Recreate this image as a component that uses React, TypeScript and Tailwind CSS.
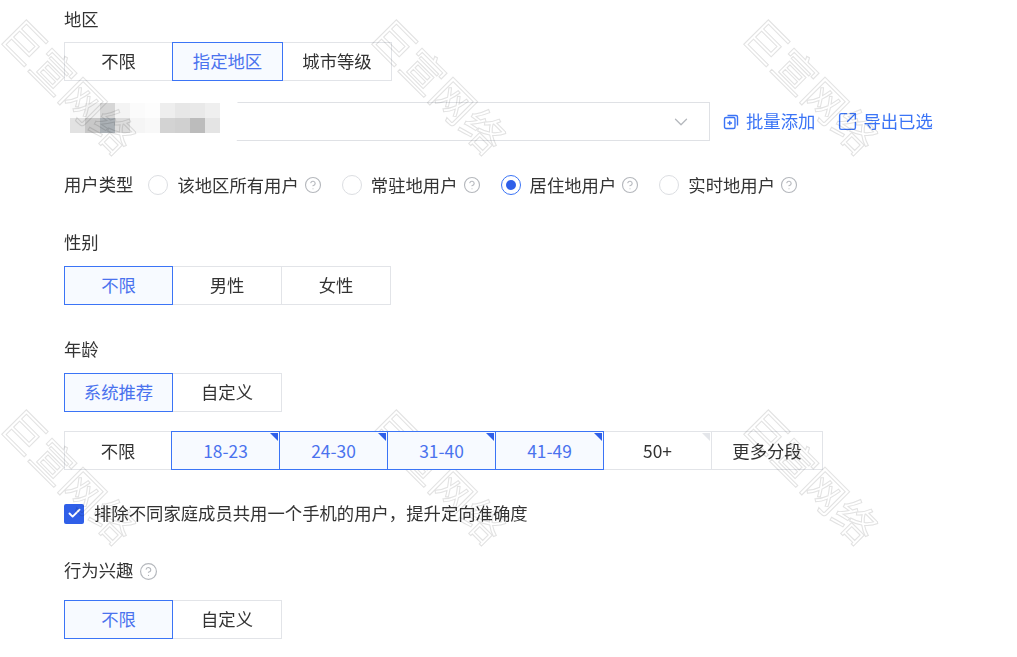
import { ChevronDown, CircleHelp, SquareArrowOutUpRight, Check } from "lucide-react";

function Seg({ label, active, corner, w = "w-[110px]" }: { label: string; active?: boolean; corner?: "on" | "off"; w?: string }) {
  return (
    <div
      className={
        "relative -ml-px first:ml-0 h-full flex items-center justify-center border pb-[2px] " +
        w +
        (active ? " z-10 border-[#3b74f6] bg-[#f7faff] text-[#4a72ee]" : " border-[#e2e4e8] bg-white text-[#333333]")
      }
    >
      {label}
      {corner === "on" && (
        <span className="absolute top-px right-px w-0 h-0 border-l-[8px] border-l-transparent border-t-[8px] border-t-[#2f5fe8]" />
      )}
      {corner === "off" && (
        <span className="absolute top-px right-px w-0 h-0 border-l-[8px] border-l-transparent border-t-[8px] border-t-[#e4e6ea]" />
      )}
    </div>
  );
}

function Radio({ label, checked, className }: { label: string; checked?: boolean; className?: string }) {
  return (
    <div className={"flex items-center " + (className ?? "")}>
      <span className={"w-5 h-5 rounded-full border flex items-center justify-center bg-white " + (checked ? "border-[#3b74f6]" : "border-[#dcdee2]")}>
        {checked && <span className="w-2.5 h-2.5 rounded-full bg-[#2f5fe8]" />}
      </span>
      <span className="ml-[9px]">{label}</span>
      <CircleHelp size={18} strokeWidth={1.5} className="ml-[5px] text-[#b5b8bd]" />
    </div>
  );
}

function BatchIcon() {
  return (
    <svg width="16" height="16" viewBox="0 0 16 16" fill="none" stroke="#3b74f6" strokeWidth="1.4">
      <rect x="1.5" y="3.5" width="10.5" height="11" rx="1.5" />
      <path d="M4.5 1.5H13a1.5 1.5 0 0 1 1.5 1.5v8.5" />
      <path d="M6.7 6.7v4.6M4.4 9h4.6" />
    </svg>
  );
}

function Mark({ pos }: { pos: string }) {
  return (
    <div
      className={
        "absolute rotate-45 origin-center whitespace-nowrap text-[42px] leading-none font-normal text-transparent [-webkit-text-stroke:1px_#e2e2e2] " +
        pos
      }
    >
      巨宣网络
    </div>
  );
}

const row1 = ["#fbfbfb", "#f1f1f1", "#d6d6d6", "#f4f4f4", "#fbfbfb", "#fdfdfd", "#eeeeee", "#e7e7e7", "#e9e9e9", "#efefef"];
const row2 = ["#e2e2e2", "#c8c8c8", "#aab0b5", "#dcdcdc", "#f5f5f5", "#f8f8f8", "#d3d3d3", "#d0d0d0", "#bcbcbc", "#e4e4e4"];

export default function App() {
  return (
    <div
      className="relative w-[1017px] h-[657px] overflow-hidden bg-white pl-16 pt-[9px] text-[17.35px] leading-[20px] text-[#333333]"
      style={{ fontFamily: '"Noto Sans CJK SC", "Noto Sans", sans-serif' }}
    >
      <div>地区</div>
      <div className="flex h-[39px] mt-[13px]">
        <Seg label="不限" w="w-[109px]" />
        <Seg label="指定地区" active w="w-[111px]" />
        <Seg label="城市等级" />
      </div>

      <div className="flex items-center mt-[21px]">
        <div className="w-[646px] h-[39px] border border-[#dfe1e5] flex items-center justify-end pr-[17px] text-[#b5b8bd]">
          <ChevronDown size={22} strokeWidth={1.4} />
        </div>
        <div className="flex items-center ml-[13px] text-[#3b74f6]">
          <BatchIcon />
          <span className="ml-[7px] pb-[2px]">批量添加</span>
          <SquareArrowOutUpRight size={21} strokeWidth={1.6} className="ml-[22px]" />
          <span className="ml-[5px] pb-[2px]">导出已选</span>
        </div>
      </div>

      <div className="flex items-center mt-[34px] h-5">
        <span className="pb-[2px]">用户类型</span>
        <Radio label="该地区所有用户" className="ml-[15px]" />
        <Radio label="常驻地用户" className="ml-[20px]" />
        <Radio label="居住地用户" checked className="ml-[20px]" />
        <Radio label="实时地用户" className="ml-[20px]" />
      </div>

      <div className="mt-[37px]">性别</div>
      <div className="flex h-[39px] mt-[14px]">
        <Seg label="不限" active w="w-[109px]" />
        <Seg label="男性" />
        <Seg label="女性" />
      </div>

      <div className="mt-[34px]">年龄</div>
      <div className="flex h-[39px] mt-[14px]">
        <Seg label="系统推荐" active w="w-[109px]" />
        <Seg label="自定义" />
      </div>

      <div className="flex h-[39px] mt-[19px] [&>div]:pb-0">
        <Seg label="不限" w="w-[108px]" />
        <Seg label="18-23" active corner="on" w="w-[109px]" />
        <Seg label="24-30" active corner="on" w="w-[109px]" />
        <Seg label="31-40" active corner="on" w="w-[109px]" />
        <Seg label="41-49" active corner="on" w="w-[109px]" />
        <Seg label="50+" corner="off" w="w-[109px]" />
        <Seg label="更多分段" w="w-[112px]" />
      </div>

      <div className="flex items-center mt-[33px]">
        <span className="w-5 h-5 rounded-[2px] bg-[#2f5fe8] flex items-center justify-center text-white">
          <Check size={15} strokeWidth={3} />
        </span>
        <span className="ml-[10px] pb-px">排除不同家庭成员共用一个手机的用户，提升定向准确度</span>
      </div>

      <div className="flex items-center mt-[36px]">
        <span className="pb-[2px]">行为兴趣</span>
        <CircleHelp size={19} strokeWidth={1.5} className="ml-[6px] text-[#b5b8bd]" />
      </div>
      <div className="flex h-[39px] mt-[18px]">
        <Seg label="不限" active w="w-[109px]" />
        <Seg label="自定义" />
      </div>

      {/* blurred-out region */}
      <div className="absolute left-[55px] top-[95px] w-[185px] h-[52px] rounded-r-2xl bg-white pl-[15px] pt-2 blur-[0.5px]">
        <div className="flex">
          {row1.map((c, i) => (
            <span key={i} className="w-[15px] h-[15px]" style={{ background: c }} />
          ))}
        </div>
        <div className="flex">
          {row2.map((c, i) => (
            <span key={i} className="w-[15px] h-[15px]" style={{ background: c }} />
          ))}
        </div>
      </div>

      {/* watermark */}
      <div className="absolute inset-0 pointer-events-none mix-blend-multiply">
        <Mark pos="left-[-14px] top-[64px]" />
        <Mark pos="left-[356px] top-[64px]" />
        <Mark pos="left-[728px] top-[64px]" />
        <Mark pos="left-[-14px] top-[454px]" />
        <Mark pos="left-[356px] top-[454px]" />
        <Mark pos="left-[728px] top-[454px]" />
      </div>
    </div>
  );
}
